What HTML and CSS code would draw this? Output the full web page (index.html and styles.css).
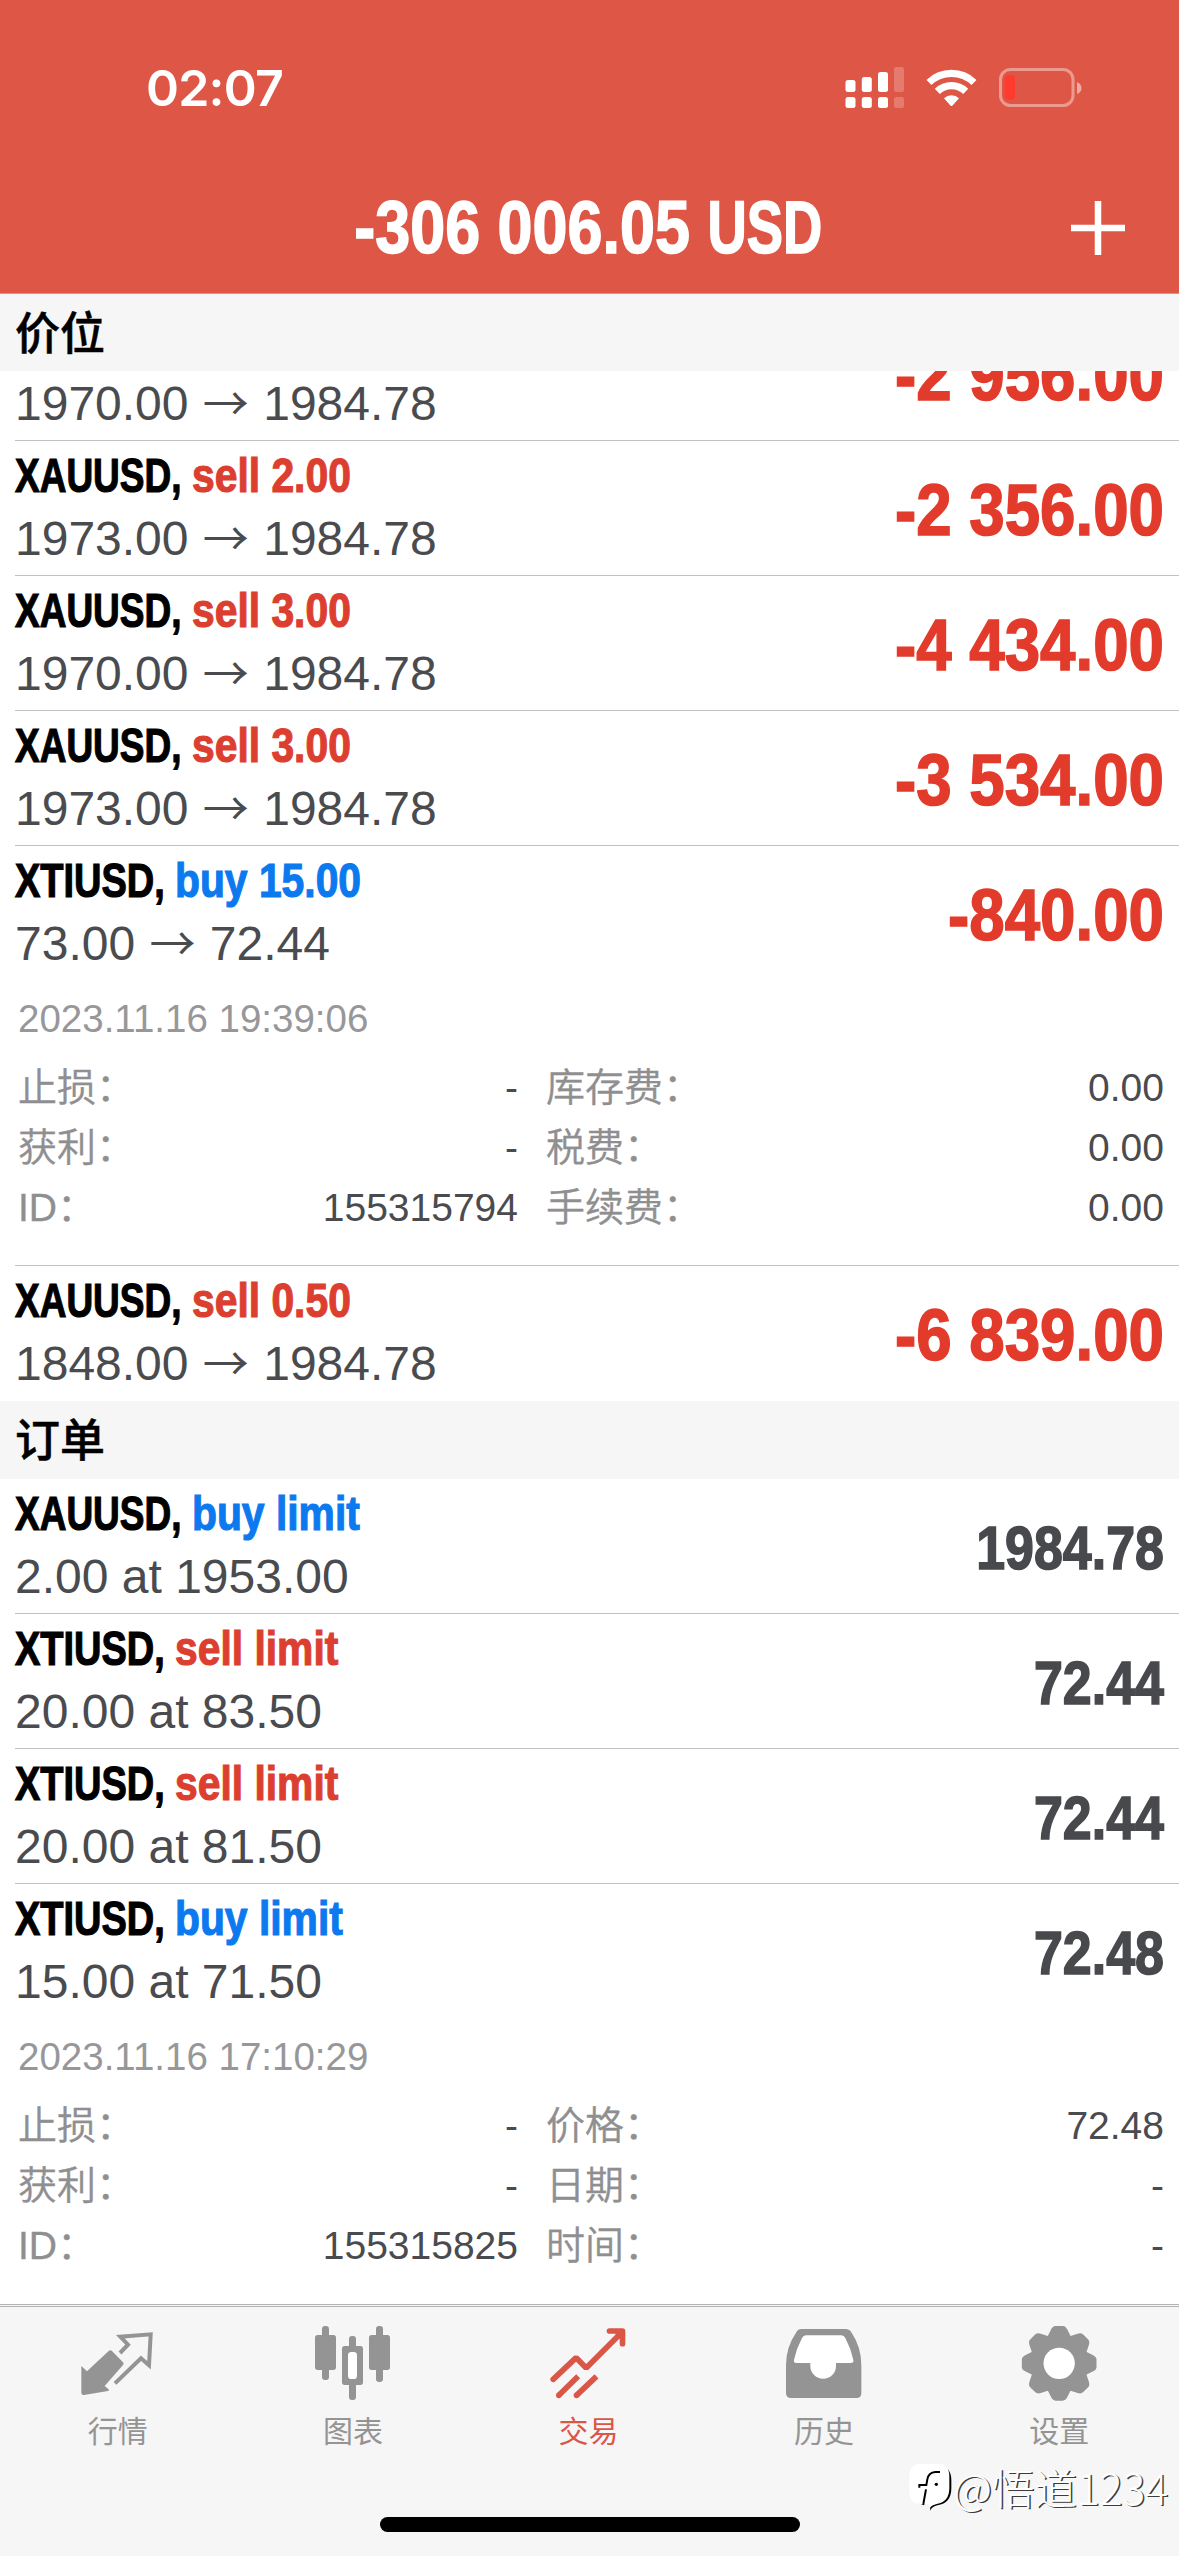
FILE: index.html
```html
<!DOCTYPE html>
<html lang="zh-CN">
<head>
<meta charset="utf-8">
<title>交易</title>
<link rel="stylesheet" href="styles.css">
</head>
<body>
<div class="screen">
  <header class="header">
    <div class="status">
      <span class="clock">02:07</span>
      <svg class="status-icons" width="240" height="44" viewBox="843 66 240 44">
        <g fill="#fff">
          <rect x="845.5" y="80" width="10" height="12" rx="2.5"/>
          <rect x="861.8" y="77" width="10" height="15" rx="2.5"/>
          <rect x="878" y="72" width="10" height="20" rx="2.5"/>
          <rect x="845.5" y="97" width="10" height="11" rx="2.5"/>
          <rect x="861.8" y="97" width="10" height="11" rx="2.5"/>
          <rect x="878" y="97" width="10" height="11" rx="2.5"/>
        </g>
        <g fill="#fff" fill-opacity=".22">
          <rect x="894" y="67" width="10" height="25" rx="2.5"/>
          <rect x="894" y="97" width="10" height="11" rx="2.5"/>
        </g>
        <g fill="none" stroke="#fff" stroke-width="7.2">
          <path d="M929 82.5a32.5 32.5 0 0 1 45 0"/>
          <path d="M937.3 91.3a20.5 20.5 0 0 1 28.4 0"/>
        </g>
        <path fill="#fff" d="M944 98.3a10.8 10.8 0 0 1 15 0l-6.700 7.400q-.8.800-1.600 0z"/>
        <rect x="1000.500" y="69.500" width="72.500" height="36" rx="10" fill="none" stroke="#fff" stroke-opacity=".4" stroke-width="3"/>
        <path fill="#fff" fill-opacity=".5" d="M1077 82q4.500 2 4.500 6t-4.500 6z"/>
        <rect x="1004.500" y="75" width="10.500" height="25" rx="4" fill="#ff3b30"/>
      </svg>
    </div>
    <div class="navbar">
      <span class="balance">-306 006.05</span>
      <span class="currency">USD</span>
      <svg class="plus" width="56" height="56" viewBox="0 0 56 56"><path d="M28 1v54M1 28h54" stroke="#fff" stroke-width="6.500"/></svg>
    </div>
  </header>

  <h2 class="section">价位</h2>
  <div class="row row-cut">
    <div class="info"><div class="price">1970.00 <i class="arrow">→</i> 1984.78</div></div>
    <div class="profit">-2 956.00</div>
  </div>
  <div class="row">
    <div class="info"><div class="head"><b class="sym xau">XAUUSD,</b><b class="op sell">sell 2.00</b></div><div class="price">1973.00 <i class="arrow">→</i> 1984.78</div></div>
    <div class="profit">-2 356.00</div>
  </div>
  <div class="row">
    <div class="info"><div class="head"><b class="sym xau">XAUUSD,</b><b class="op sell">sell 3.00</b></div><div class="price">1970.00 <i class="arrow">→</i> 1984.78</div></div>
    <div class="profit">-4 434.00</div>
  </div>
  <div class="row">
    <div class="info"><div class="head"><b class="sym xau">XAUUSD,</b><b class="op sell">sell 3.00</b></div><div class="price">1973.00 <i class="arrow">→</i> 1984.78</div></div>
    <div class="profit">-3 534.00</div>
  </div>
  <div class="row row-open">
    <div class="info"><div class="head"><b class="sym xti">XTIUSD,</b><b class="op buy">buy 15.00</b></div><div class="price">73.00 <i class="arrow">→</i> 72.44</div></div>
    <div class="profit">-840.00</div>
    <div class="date">2023.11.16 19:39:06</div>
    <dl class="details">
      <dt>止损：</dt><dd>-</dd><dt>库存费：</dt><dd>0.00</dd>
      <dt>获利：</dt><dd>-</dd><dt>税费：</dt><dd>0.00</dd>
      <dt>ID：</dt><dd>155315794</dd><dt>手续费：</dt><dd>0.00</dd>
    </dl>
  </div>
  <div class="row row-last">
    <div class="info"><div class="head"><b class="sym xau">XAUUSD,</b><b class="op sell">sell 0.50</b></div><div class="price">1848.00 <i class="arrow">→</i> 1984.78</div></div>
    <div class="profit">-6 839.00</div>
  </div>

  <h2 class="section section-orders">订单</h2>
  <div class="row">
    <div class="info"><div class="head"><b class="sym xau">XAUUSD,</b><b class="op buy">buy limit</b></div><div class="price">2.00 at 1953.00</div></div>
    <div class="profit quote">1984.78</div>
  </div>
  <div class="row">
    <div class="info"><div class="head"><b class="sym xti">XTIUSD,</b><b class="op sell">sell limit</b></div><div class="price">20.00 at 83.50</div></div>
    <div class="profit quote">72.44</div>
  </div>
  <div class="row">
    <div class="info"><div class="head"><b class="sym xti">XTIUSD,</b><b class="op sell">sell limit</b></div><div class="price">20.00 at 81.50</div></div>
    <div class="profit quote">72.44</div>
  </div>
  <div class="row row-open row-last">
    <div class="info"><div class="head"><b class="sym xti">XTIUSD,</b><b class="op buy">buy limit</b></div><div class="price">15.00 at 71.50</div></div>
    <div class="profit quote">72.48</div>
    <div class="date">2023.11.16 17:10:29</div>
    <dl class="details">
      <dt>止损：</dt><dd>-</dd><dt>价格：</dt><dd>72.48</dd>
      <dt>获利：</dt><dd>-</dd><dt>日期：</dt><dd>-</dd>
      <dt>ID：</dt><dd>155315825</dd><dt>时间：</dt><dd>-</dd>
    </dl>
  </div>

  <nav class="tabbar">
    <div class="tab">
      <svg width="80" height="84" viewBox="53 30 240 252" fill="currentColor">
        <path d="M63 168l17 16 65-61q5-5 10 0l33 34q4 4 0 8l-55 63 12 10q3 4-2 5l-72 12q-8 1-8-8z"/>
        <path fill="none" stroke="currentColor" stroke-width="12" d="M179 129l24-25-23-24 91-7-5 93-24-21-78 75"/>
      </svg>
      <span>行情</span>
    </div>
    <div class="tab">
      <svg width="80" height="84" viewBox="759 30 240 252" fill="currentColor">
        <rect x="786" y="48" width="21" height="162" rx="9"/><rect x="765" y="75" width="63" height="105" rx="8"/>
        <rect x="867" y="78" width="21" height="192" rx="9"/><rect x="846" y="108" width="63" height="117" rx="8"/><rect x="864" y="126" width="27" height="81" rx="10" fill="#fff"/>
        <rect x="948" y="48" width="21" height="168" rx="9"/><rect x="927" y="75" width="63" height="105" rx="8"/>
      </svg>
      <span>图表</span>
    </div>
    <div class="tab active">
      <svg width="80" height="84" viewBox="55.500 30 240 252" fill="none" stroke="currentColor" stroke-width="17">
        <path stroke-linecap="round" stroke-linejoin="bevel" d="M71 208l69-65 30 31L274 70"/>
        <path stroke-linecap="round" stroke-linejoin="round" d="M240 63h39v38"/>
        <path fill="currentColor" stroke="none" d="M250 63h30v32z"/>
        <path d="M88 256l58-57M141 256l60-57"/>
        <g fill="currentColor" stroke="none"><circle cx="88" cy="256" r="8.500"/><circle cx="141" cy="256" r="8.500"/></g>
      </svg>
      <span>交易</span>
    </div>
    <div class="tab">
      <svg width="80" height="84" viewBox="762 30 240 252" fill="currentColor">
        <path d="M814 57H946Q958 57 964 67 994 112 994 165V250Q994 264 980 264H783Q768 264 768 250V165Q768 112 799 67 804 57 814 57Z"/>
        <path fill="#fff" d="M828 76H934Q942 76 946 84 963 116 970 150 972 159 962 159H918V168A38.500 38.500 0 0 1 841 168V159H799Q790 159 792 150 799 116 816 84 820 76 828 76Z"/>
      </svg>
      <span>历史</span>
    </div>
    <div class="tab">
      <svg width="80" height="84" viewBox="388 30 240 252" fill="currentColor">
        <g transform="translate(508.500 160)">
          <path id="teeth" d="M-36-78l12-24q5-10 13-10h22q8 0 13 10l12 24v156l-12 24q-5 10-13 10h-22q-8 0-13-10l-12-24z"/>
          <use href="#teeth" transform="rotate(45)"/><use href="#teeth" transform="rotate(90)"/><use href="#teeth" transform="rotate(135)"/>
          <circle r="47" fill="#fff"/>
        </g>
      </svg>
      <span>设置</span>
    </div>
    <div class="home-bar"></div>
    <div class="watermark">
      <svg width="46" height="52" viewBox="42 474 138 156">
        <path fill="#000" d="M130 482q42 4 42 46v24q0 46-42 52-14 3-22 16l2-22z"/>
        <path fill="#000" d="M60 592l30 12 4-12z"/>
        <path fill="#fff" d="M80 480h54q32 0 32 38v34q0 42-38 48-12 2-20 10l-6-10H80q-34 0-34-38v-44q0-38 34-38z"/>
        <path fill="none" stroke="#000" stroke-width="6" d="M138 504h-14q-20 1-24 22l-3 17H76v8M96 556l-8 44"/>
        <circle cx="127" cy="541" r="5"/>
      </svg>
      <span>@悟道1234</span>
    </div>
  </nav>
</div>
</body>
</html>
```
FILE: styles.css
```css
* { box-sizing: border-box; }

body {
  margin: 0;
  background: #fff;
  font-family: "Liberation Sans", "Noto Sans CJK SC", sans-serif;
  color: #4a4b4f;
}

.screen {
  width: 1179px;
  height: 2556px;
  overflow: hidden;
  display: flex;
  flex-direction: column;
}

/* Header */
.header {
  height: 294px;
  flex: none;
  background: #de5746;
  border-bottom: 1px solid #d9958d;
  color: #fff;
}

.status {
  height: 176px;
  padding: 0 96px 0 146px;
  display: flex;
  justify-content: space-between;
  align-items: center;
}

.clock {
  font-family: Inter, sans-serif;
  font-weight: 600;
  font-size: 50px;
  line-height: 60px;
  letter-spacing: -.8px;
}

.navbar {
  height: 104px;
  display: grid;
  grid-template-columns: 690px 376px 56px;
  column-gap: 2px;
  align-items: center;
  font-weight: 700;
  font-size: 74px;
  line-height: 104px;
  white-space: nowrap;
  -webkit-text-stroke: 1.6px currentColor;
}

.balance {
  text-align: right;
  transform: scaleX(.85);
  transform-origin: 100% 50%;
}

.currency {
  padding-left: 21px;
  transform: scaleX(.735);
  transform-origin: 0 50%;
}

.plus { display: block; }

/* Sections and rows */
.section {
  margin: 0;
  flex: none;
  height: 77px;
  padding-left: 15px;
  background: #f6f6f7;
  color: #000;
  font: 500 45px/73px "Noto Sans CJK SC", sans-serif;
  -webkit-text-stroke: .5px #000;
}

.section-orders { height: 78px; }

.row {
  flex: none;
  height: 135px;
  margin-left: 15px;
  padding-right: 15px;
  border-bottom: 1px solid #c2c2c5;
  display: grid;
  grid-template-columns: 500px 1fr;
  grid-template-rows: 135px;
}

/* First row, partly scrolled under the section title */
.row-cut {
  height: 70px;
  overflow: hidden;
  align-content: end;
}

.row-cut > * { margin-bottom: -1px; margin-top: 1px; }
.row-cut .price { margin-top: 63px; }

.row-open {
  height: 420px;
  grid-template-rows: 135px 76px 180px;
}

.row-last { border-bottom-color: transparent; }

.info { padding-top: 3px; white-space: nowrap; }

.head {
  display: flex;
  font-size: 49px;
  line-height: 63px;
  -webkit-text-stroke: 1.2px currentColor;
}

.sym {
  color: #000;
  transform: scaleX(.755);
  transform-origin: 0 50%;
}

.xau { width: 177px; }
.xti { width: 160px; transform: scaleX(.775); }

.op { transform: scaleX(.833); transform-origin: 0 50%; }
.sell { color: #dc3f30; }
.buy { color: #0c79ee; }

.price { font-size: 48px; line-height: 63px; }

.arrow {
  margin: 0 1px;
  font: 400 46px/1px "Noto Sans CJK SC", sans-serif;
}

.profit {
  font-weight: 700;
  font-size: 73px;
  line-height: 137px;
  color: #e33b2b;
  text-align: right;
  white-space: nowrap;
  transform: scaleX(.872);
  transform-origin: 100% 50%;
  -webkit-text-stroke: 1.6px currentColor;
}

.quote {
  font-size: 62px;
  color: #48494d;
  transform: scaleX(.838);
}

.date {
  grid-column: 1 / -1;
  padding: 8px 0 0 3px;
  font-size: 38.5px;
  line-height: 60px;
  color: #97979a;
}

.details {
  grid-column: 1 / -1;
  margin: 0;
  padding-left: 3px;
  display: grid;
  grid-template-columns: 180px 320px 180px 1fr;
  grid-auto-rows: 60px;
  font-size: 39px;
  line-height: 61px;
}

.details dt { color: #8f8f91; font-weight: 350; white-space: nowrap; -webkit-text-stroke: .4px currentColor; }
.details dt:nth-of-type(even) { padding-left: 28px; }
.details dd { margin: 0; text-align: right; }

/* Bottom tabs */
.tabbar {
  position: relative;
  flex: 1;
  padding: 13px 2px 0 0;
  border-top: 3px double #b4b4b6;
  background: #f6f6f6;
  display: grid;
  grid-template-columns: repeat(5, 1fr);
  align-items: start;
}

.tab {
  display: flex;
  flex-direction: column;
  align-items: center;
  color: #949494;
  font: 400 30px/44px "Noto Sans CJK SC", sans-serif;
}

.tab svg { margin-bottom: 3px; }
.active { color: #da5647; }

.home-bar {
  position: absolute;
  left: 380px;
  bottom: 24px;
  width: 420px;
  height: 15px;
  border-radius: 8px;
  background: #000;
}

.watermark {
  position: absolute;
  right: 11px;
  bottom: 41px;
  display: flex;
  align-items: center;
  color: #fff;
  font: 300 42.5px/56px "Noto Sans CJK SC", sans-serif;
  text-shadow: 1.5px 1px 0 #3c3c3c;
}

.watermark svg { margin: 2px -1px 0 0; }
```
